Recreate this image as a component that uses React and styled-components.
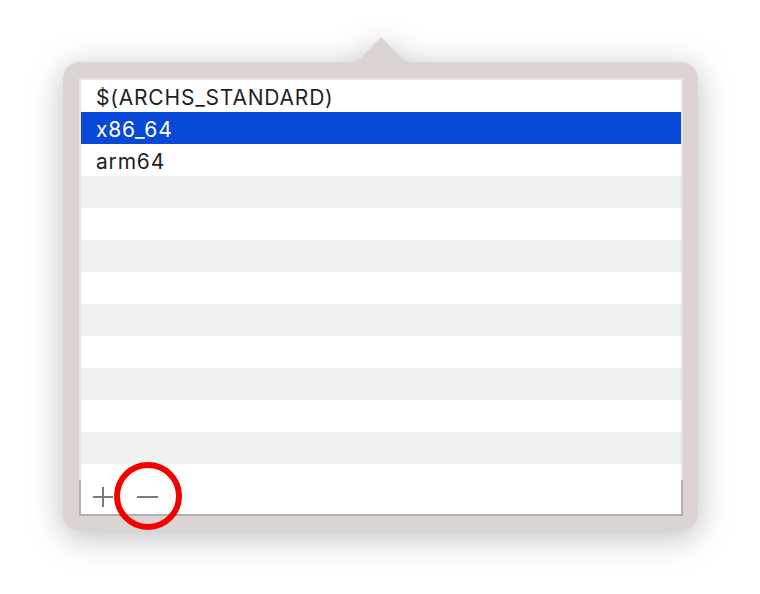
import React from 'react';
import styled, { createGlobalStyle } from 'styled-components';

const GlobalStyle = createGlobalStyle`
    html, body {
        margin: 0;
        padding: 0;
        background: #ffffff;
    }
    body {
        font-family: "Inter", "Liberation Sans", sans-serif;
    }
`;

const Page = styled.div`
    width: 760px;
    height: 594px;
    display: flex;
    justify-content: center;
    padding-top: 62px;
    box-sizing: border-box;
`;

const Popover = styled.div`
    position: relative;
    width: 635px;
    height: 469px;
    margin-left: 1px;
    filter: drop-shadow(0 6px 16px rgba(0, 0, 0, 0.26));
`;

const Frame = styled.div`
    width: 100%;
    height: 100%;
    box-sizing: border-box;
    padding: 16px 15px 15px 16px;
    background: #dcd4d3;
    border-radius: 17px;
`;

const Arrow = styled.svg`
    position: absolute;
    top: -29px;
    left: 288px;
`;

const Table = styled.div`
    display: flex;
    flex-direction: column;
    width: 604px;
    height: 438px;
`;

const List = styled.div`
    flex: 1;
    display: flex;
    flex-direction: column;
    background: #ffffff;
    border: 2px solid #e6e4e4;
    border-bottom: none;
`;

const Row = styled.div`
    height: 32px;
    box-sizing: border-box;
    display: flex;
    align-items: center;
    padding: 2px 0 0 15px;
    font-size: 21px;
    letter-spacing: 0.8px;
    color: ${p => (p.selected ? '#ffffff' : '#1f1f1f')};
    background: ${p => (p.selected ? '#0849d7' : p.striped ? '#eff1f0' : '#ffffff')};
`;

const Footer = styled.div`
    height: 34px;
    display: flex;
    background: #ffffff;
    border: 2px solid #b1afaf;
    border-top: none;
`;

const ToolButton = styled.div`
    position: relative;
    width: 44px;
    height: 34px;
    display: flex;
    align-items: center;
    justify-content: center;
`;

const Highlight = styled.div`
    position: absolute;
    left: -11px;
    top: -18px;
    width: 68px;
    height: 68px;
    box-sizing: border-box;
    border: 6px solid #f40000;
    border-radius: 50%;
`;

const items = [
    { label: '$(ARCHS_STANDARD)' },
    { label: 'x86_64', selected: true },
    { label: 'arm64' },
];

const App = () => {
    const rows = [];
    for (let i = 0; i < 12; i++) {
        const item = items[i] || { label: '' };
        rows.push(
            <Row key={i} selected={item.selected} striped={i >= 3 && i % 2 === 1}>
                {item.label}
            </Row>
        );
    }

    return (
        <Page>
            <GlobalStyle />
            <Popover>
                <Arrow width="60" height="33" viewBox="0 0 60 33">
                    <path
                        d="M0 33 L0 29 C4 29 7 28 10 25 L27 7 Q30 2 33 7 L50 25 C53 28 56 29 60 29 L60 33 Z"
                        fill="#dcd4d3"
                    />
                </Arrow>
                <Frame>
                    <Table>
                        <List>{rows}</List>
                        <Footer>
                            <ToolButton>
                                <svg width="22" height="22" viewBox="0 0 22 22">
                                    <path d="M11 1 V21 M1 11 H21" stroke="#7a7a7a" strokeWidth="2" fill="none" />
                                </svg>
                            </ToolButton>
                            <ToolButton>
                                <svg width="22" height="22" viewBox="0 0 22 22">
                                    <path d="M1 11 H22" stroke="#7a7a7a" strokeWidth="2" fill="none" />
                                </svg>
                                <Highlight />
                            </ToolButton>
                        </Footer>
                    </Table>
                </Frame>
            </Popover>
        </Page>
    );
};

export default App;
